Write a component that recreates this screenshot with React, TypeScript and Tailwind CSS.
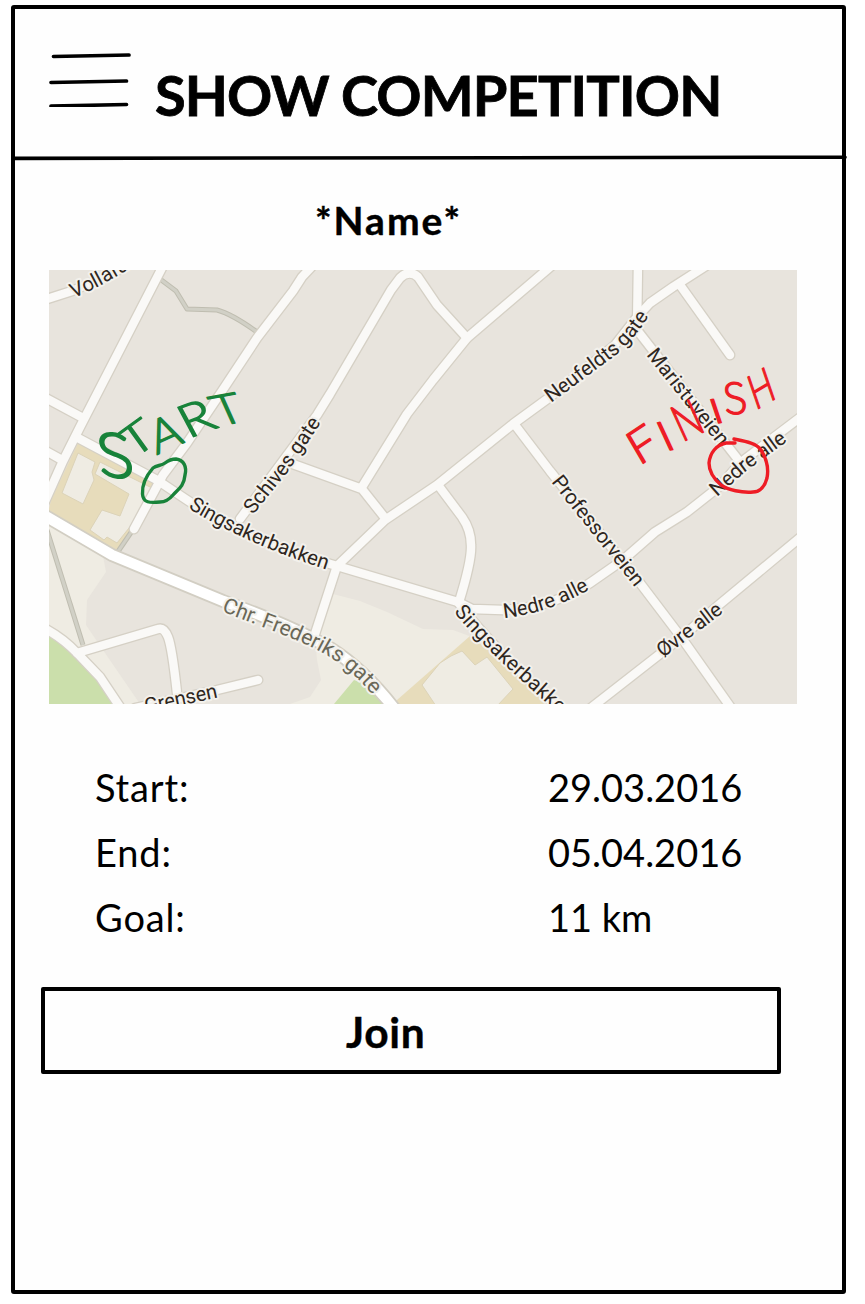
import React from "react";

// Each hand-drawn letter is placed by its centre, its width vector and its height vector.
type Vec = [number, number];
type Letter = { ch: string; at: Vec; across: Vec; down: Vec };

const GLYPH_WIDTH: Record<string, number> = { S: 25, T: 28, A: 33, R: 26, F: 22, I: 5, N: 29, H: 29 };
const CAP_HEIGHT = 36;

const START: Letter[] = [
  { ch: "S", at: [115, 455], across: [34, 3], down: [7, 45] },
  { ch: "T", at: [137, 438], across: [25, -18], down: [18, 25] },
  { ch: "A", at: [165, 433], across: [29, -13], down: [12, 31] },
  { ch: "R", at: [196, 418], across: [27, -10], down: [16, 30] },
  { ch: "T", at: [227, 409], across: [28, -5], down: [13, 29] },
];

const FINISH: Letter[] = [
  { ch: "F", at: [642, 444], across: [18, -12], down: [17, 29] },
  { ch: "I", at: [665, 436], across: [5, -1], down: [13, 28] },
  { ch: "N", at: [687, 420], across: [19, -9], down: [15, 33] },
  { ch: "I", at: [716, 411], across: [5, -1], down: [8, 24] },
  { ch: "S", at: [735, 398], across: [22, -1], down: [4, 32] },
  { ch: "H", at: [761, 388], across: [17, -10], down: [11, 32] },
];

const ROADS = [
  "M44 300 L72 291 L100 279 L135 262",
  "M165 262 L80 427 L63 461 L42 508",
  "M44 397 L83 418",
  "M44 450 L62 460",
  "M78 438 L157 480 L187 500 Q250 542 337 566 L458 602 L472 609 L503 610 Q555 607 590 583 L623 560 L655 532 L687 512 L720 486 L740 463 L802 416",
  "M458 602 Q485 640 560 710",
  "M316 262 L302 277 L293 291 L257 338 L222 391 L187 443 L163 475 L134 529",
  "M240 519 L317 415 L330 394 L391 290 L400 278 Q409 269 418 277 L437 305 L467 338",
  "M556 262 L467 338 L433 380 L407 414 L362 487",
  "M290 463 L362 489 L385 518",
  "M337 566 L385 520 L437 485 L513 424 L550 397 L615 345 L637 317 L650 303 L673 287 L712 262",
  "M638 262 L637 330 L740 462",
  "M680 285 L730 355",
  "M515 425 L550 471 L640 583 L681 637 L734 712",
  "M802 536 L720 604 L683 636 L587 711",
  "M438 485 L462 517 Q471 530 471 545 Q472 560 459 602",
  "M337 566 L314 637",
  "M44 628 Q63 638 77 653 L100 677 L122 710",
  "M77 653 L158 629 Q164 627 168 637 Q172 647 177 693",
  "M258 680 L217 690 L135 708",
];

const LABELS = [
  { id: "vollafallet", d: "M74 298 Q102 287 160 250", text: "Vollafallet" },
  { id: "schives", d: "M253 515 L287 473 L329 411", text: "Schives gate", len: 115 },
  { id: "sings1", d: "M188 508 Q247 545 340 574", text: "Singsakerbakken", len: 152 },
  { id: "grensen", d: "M146 713 L230 695", text: "Grensen", len: 74 },
  { id: "neufeldts", d: "M551 403 L616 355 Q634 341 658 302", text: "Neufeldts gate", len: 132 },
  { id: "maristu", d: "M646 355 L732 462", text: "Maristuveien", len: 118 },
  { id: "nedre1", d: "M717 497 L745 472 L800 432", text: "Nedre alle", len: 90 },
  { id: "nedre2", d: "M504 618 Q555 613 605 580", text: "Nedre alle", len: 91 },
  { id: "prof", d: "M551 482 L645 600", text: "Professorveien", len: 135 },
  { id: "ovre", d: "M663 658 L740 600", text: "Øvre alle", len: 76 },
  { id: "sings2", d: "M454 612 Q482 648 580 732", text: "Singsakerbakken", len: 158 },
];

function Handwriting({ letters, color }: { letters: Letter[]; color: string }) {
  return (
    <g fill={color} stroke={color} strokeWidth="1.5" strokeLinejoin="round" textAnchor="middle" fontSize="50" className="font-['Lato'] font-light">
      {letters.map(({ ch, at, across, down }, i) => {
        const w = GLYPH_WIDTH[ch];
        const m = [across[0] / w, across[1] / w, down[0] / CAP_HEIGHT, down[1] / CAP_HEIGHT, at[0], at[1]];
        return (
          <text key={i} y={CAP_HEIGHT / 2} transform={`matrix(${m.join(" ")})`}>
            {ch}
          </text>
        );
      })}
    </g>
  );
}

function CourseMap() {
  return (
    <svg viewBox="49 270 748 434" className="block h-[434px] w-[748px] overflow-hidden">
      <rect x="49" y="270" width="748" height="434" fill="#e8e4dd" />
      <path fill="#efece3" d="M49 518 L103 556 L106 572 L87 600 L86 625 L103 650 L140 704 L49 704Z" />
      <path fill="#efece3" d="M333 594 L360 601 L387 612 L423 629 L453 630 L472 637 L500 704 L290 704 L310 697 L321 680 L317 660 L315 634Z" />
      <path fill="#e7dcbb" d="M78 443 L157 484 L118 553 L48 513 L51 500Z" />
      <path fill="#e7dcbb" d="M470 636 L397 700 L397 704 L560 704Z" />
      <path fill="#efece3" stroke="#dcd3b8" strokeWidth="1" d="M78 453 L95 462 L92 472 L94 480 L83 504 L62 493Z" />
      <path fill="#efece3" stroke="#dcd3b8" strokeWidth="1" d="M100 462 L154 489 L133 523 L117 543 L107 537 L104 540 L90 530 L102 510 L120 516 L129 494 L95 474Z" />
      <path fill="#efece3" stroke="#dcd3b8" strokeWidth="1" d="M422 685 L440 663 L451 656 L462 651 L475 665 L487 657 L513 689 L497 706 L436 706Z" />
      <path fill="#cbdfab" d="M49 635 L77 653 L100 677 L119 706 L49 706Z" />
      <path fill="#cbdfab" d="M354 680 L334 704 L385 704 L365 684Z" />

      <g fill="none" strokeLinejoin="round">
        <g stroke="#bfbdb0" strokeWidth="5">
          <path d="M160 279 L176 291 L187 309 L217 310 Q232 314 257 332" />
          <path d="M47 530 L83 645" />
          <path d="M132 531 L117 553" />
        </g>
        <g stroke="#d1d0c6" strokeWidth="3">
          <path d="M160 279 L176 291 L187 309 L217 310 Q232 314 257 332" />
          <path d="M47 530 L83 645" />
          <path d="M132 531 L117 553" />
        </g>
        <g stroke="#d5d0c5" strokeWidth="11" strokeLinecap="round">
          {ROADS.map((d) => (
            <path key={d} d={d} />
          ))}
        </g>
        <path stroke="#d2cec3" strokeWidth="14" d="M42 514 L112 555 L223 601 Q290 625 330 648 Q365 670 397 712" />
        <g stroke="#faf9f7" strokeWidth="8.4" strokeLinecap="round">
          {ROADS.map((d) => (
            <path key={d} d={d} />
          ))}
        </g>
        <path stroke="#ffffff" strokeWidth="10.5" d="M42 514 L112 555 L223 601 Q290 625 330 648 Q365 670 397 712" />
      </g>

      <defs>
        {LABELS.map((l) => (
          <path key={l.id} id={l.id} d={l.d} />
        ))}
        <path id="frederiks" d="M221 611 C268 630 310 642 340 664 C356 675 369 690 392 718" />
      </defs>
      <g
        fill="#2e2620"
        stroke="#f3f1ec"
        strokeWidth="4"
        strokeLinejoin="round"
        paintOrder="stroke"
        fontSize="20.5"
        className="font-['Roboto']"
      >
        {LABELS.map((l) => (
          <text key={l.id} textLength={l.len}>
            <textPath href={`#${l.id}`} textLength={l.len}>
              {l.text}
            </textPath>
          </text>
        ))}
        <text fill="#6a6858" fontSize="21.5" textLength={176}>
          <textPath href="#frederiks" textLength={176}>
            Chr. Frederiks gate
          </textPath>
        </text>
      </g>

      <Handwriting letters={START} color="#18833a" />
      <Handwriting letters={FINISH} color="#ee1c25" />
      <g fill="none" strokeWidth="3.4" strokeLinecap="round" strokeLinejoin="round">
        <path
          stroke="#18833a"
          d="M165 463 C169 460 173 459 176 459 C184 460 187 467 185 475 C184 487 177 490 173 495 C168 501 164 502 160 502 C150 503 143 503 142.500 494 C142 486 146 476 153 468 C157 465 161 466 165 463"
        />
        <path
          stroke="#ee1c25"
          d="M734 439 C744 441 757 443 761 450 C766 458 769 468 767 478 C765 486 760 492 753 492 C742 493 728 490 721 485 C714 479 709 472 709 463 C710 453 716 445 726 443 L735 443"
        />
      </g>
    </svg>
  );
}

const DETAILS = [
  ["Start:", "29.03.2016"],
  ["End:", "05.04.2016"],
  ["Goal:", "11 km"],
];

export default function App() {
  return (
    <div className="h-[1304px] w-[865px] bg-white pt-[5px] pl-[11px] font-['Lato',sans-serif] text-black">
      <div className="flex h-[1289px] w-[835px] flex-col rounded-[3px] border-4 border-black bg-[#fefefe]">
        <header className="flex h-[147px] shrink-0 items-start">
          <svg viewBox="0 0 84 56" className="mt-[42px] ml-[32px] h-[56px] w-[84px] shrink-0" fill="none" stroke="#000" strokeWidth="3.7" strokeLinecap="round">
            <path d="M6.500 5.500 L82 4" />
            <path d="M4 31.500 L79.500 30" />
            <path d="M4 55 L79.500 53.500" />
          </svg>
          <h1 className="mt-[54px] ml-[24px] text-[56px] leading-[64px] font-bold tracking-[-0.87px] whitespace-nowrap [-webkit-text-stroke:0.8px_black]">
            SHOW COMPETITION
          </h1>
        </header>
        <svg viewBox="0 0 833 4" className="h-[4px] w-[833px] shrink-0 overflow-visible">
          <path d="M0 2.400 L830 1.200" stroke="#000" strokeWidth="3.600" strokeLinecap="round" />
        </svg>
        <h2 className="mt-[39px] ml-[300px] h-[42px] text-[39px] leading-[42px] font-bold tracking-[2px] whitespace-nowrap [-webkit-text-stroke:0.4px_black]">
          *Name*
        </h2>
        <div className="mt-[29px] ml-[34px]">
          <CourseMap />
        </div>
        <dl className="mt-[51px] ml-[80px] grid grid-cols-[453px_1fr] text-[38px] leading-[65px]">
          {DETAILS.map(([label, value]) => (
            <React.Fragment key={label}>
              <dt className="tracking-[0.85px]">{label}</dt>
              <dd>{value}</dd>
            </React.Fragment>
          ))}
        </dl>
        <button className="mt-[37px] ml-[26px] flex h-[87px] w-[740px] items-center rounded-[2px] border-4 border-black pt-[2px] pl-[301px] text-[42.5px] font-bold tracking-[0.7px] [-webkit-text-stroke:0.4px_black]">
          Join
        </button>
      </div>
    </div>
  );
}
